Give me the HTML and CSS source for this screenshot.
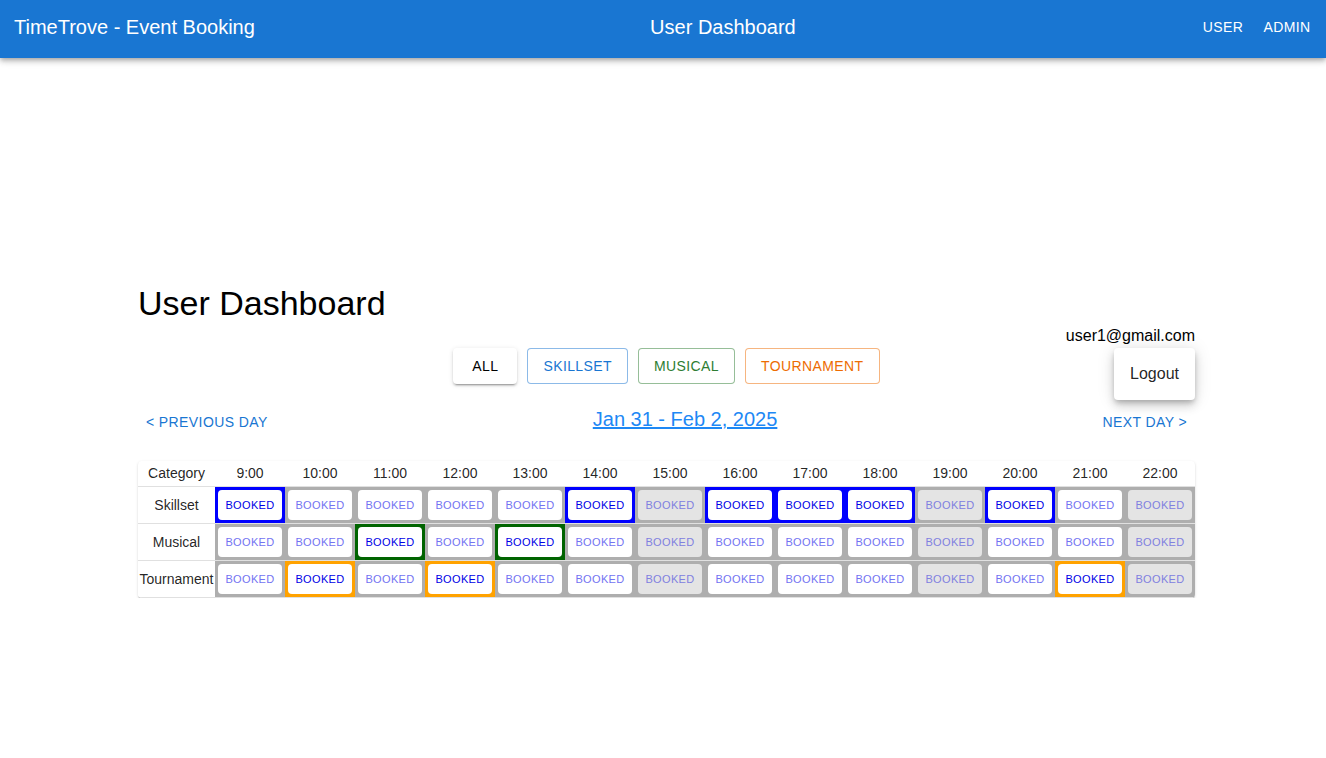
FILE: index.html
```html
<!DOCTYPE html>
<html lang="en">
<head>
<meta charset="utf-8">
<title>TimeTrove - Event Booking</title>
<link rel="stylesheet" href="styles.css">
</head>
<body>
<header class="appbar">
  <div class="brand">TimeTrove - Event Booking</div>
  <div class="bar-title">User Dashboard</div>
  <nav class="bar-nav">
    <button class="bar-btn">User</button>
    <button class="bar-btn">Admin</button>
  </nav>
</header>

<main class="page">
  <h1 class="page-title">User Dashboard</h1>

  <div class="toolbar">
    <div></div>
    <div class="filters">
      <button class="filter filter-all">All</button>
      <button class="filter filter-skill">Skillset</button>
      <button class="filter filter-music">Musical</button>
      <button class="filter filter-tour">Tournament</button>
    </div>
    <div class="user-box">
      <div class="user-email">user1@gmail.com</div>
      <button class="logout">Logout</button>
    </div>
  </div>

  <div class="daynav">
    <button class="nav-btn">&lt; Previous Day</button>
    <a class="date-link" href="#">Jan 31 - Feb 2, 2025</a>
    <button class="nav-btn">Next Day &gt;</button>
  </div>

  <div class="table-paper">
    <table class="sched">
      <colgroup>
        <col class="col-cat">
        <col class="col-slot"><col class="col-slot"><col class="col-slot"><col class="col-slot"><col class="col-slot"><col class="col-slot"><col class="col-slot">
        <col class="col-slot"><col class="col-slot"><col class="col-slot"><col class="col-slot"><col class="col-slot"><col class="col-slot"><col class="col-slot">
      </colgroup>
      <thead>
        <tr>
          <th>Category</th>
          <th>9:00</th><th>10:00</th><th>11:00</th><th>12:00</th><th>13:00</th><th>14:00</th><th>15:00</th>
          <th>16:00</th><th>17:00</th><th>18:00</th><th>19:00</th><th>20:00</th><th>21:00</th><th>22:00</th>
        </tr>
      </thead>
      <tbody>
        <tr>
          <td class="cat">Skillset</td>
          <td class="slot on-blue"><span class="cell-btn active">Booked</span></td>
          <td class="slot"><span class="cell-btn">Booked</span></td>
          <td class="slot"><span class="cell-btn">Booked</span></td>
          <td class="slot"><span class="cell-btn">Booked</span></td>
          <td class="slot"><span class="cell-btn">Booked</span></td>
          <td class="slot on-blue"><span class="cell-btn active">Booked</span></td>
          <td class="slot"><span class="cell-btn off">Booked</span></td>
          <td class="slot on-blue"><span class="cell-btn active">Booked</span></td>
          <td class="slot on-blue"><span class="cell-btn active">Booked</span></td>
          <td class="slot on-blue"><span class="cell-btn active">Booked</span></td>
          <td class="slot"><span class="cell-btn off">Booked</span></td>
          <td class="slot on-blue"><span class="cell-btn active">Booked</span></td>
          <td class="slot"><span class="cell-btn">Booked</span></td>
          <td class="slot"><span class="cell-btn off">Booked</span></td>
        </tr>
        <tr>
          <td class="cat">Musical</td>
          <td class="slot"><span class="cell-btn">Booked</span></td>
          <td class="slot"><span class="cell-btn">Booked</span></td>
          <td class="slot on-green"><span class="cell-btn active">Booked</span></td>
          <td class="slot"><span class="cell-btn">Booked</span></td>
          <td class="slot on-green"><span class="cell-btn active">Booked</span></td>
          <td class="slot"><span class="cell-btn">Booked</span></td>
          <td class="slot"><span class="cell-btn off">Booked</span></td>
          <td class="slot"><span class="cell-btn">Booked</span></td>
          <td class="slot"><span class="cell-btn">Booked</span></td>
          <td class="slot"><span class="cell-btn">Booked</span></td>
          <td class="slot"><span class="cell-btn off">Booked</span></td>
          <td class="slot"><span class="cell-btn">Booked</span></td>
          <td class="slot"><span class="cell-btn">Booked</span></td>
          <td class="slot"><span class="cell-btn off">Booked</span></td>
        </tr>
        <tr>
          <td class="cat">Tournament</td>
          <td class="slot"><span class="cell-btn">Booked</span></td>
          <td class="slot on-orange"><span class="cell-btn active">Booked</span></td>
          <td class="slot"><span class="cell-btn">Booked</span></td>
          <td class="slot on-orange"><span class="cell-btn active">Booked</span></td>
          <td class="slot"><span class="cell-btn">Booked</span></td>
          <td class="slot"><span class="cell-btn">Booked</span></td>
          <td class="slot"><span class="cell-btn off">Booked</span></td>
          <td class="slot"><span class="cell-btn">Booked</span></td>
          <td class="slot"><span class="cell-btn">Booked</span></td>
          <td class="slot"><span class="cell-btn">Booked</span></td>
          <td class="slot"><span class="cell-btn off">Booked</span></td>
          <td class="slot"><span class="cell-btn">Booked</span></td>
          <td class="slot on-orange"><span class="cell-btn active">Booked</span></td>
          <td class="slot"><span class="cell-btn off">Booked</span></td>
        </tr>
      </tbody>
    </table>
  </div>
</main>
</body>
</html>
```

FILE: styles.css
```css
* { box-sizing: border-box; }

html, body {
  margin: 0;
  padding: 0;
  background: #fff;
  font-family: "Liberation Sans", Arial, Helvetica, sans-serif;
  color: rgba(0, 0, 0, 0.87);
}

button {
  font-family: inherit;
  cursor: pointer;
}

/* App bar */
.appbar {
  height: 58px;
  background: #1976d2;
  color: #fff;
  display: flex;
  align-items: center;
  padding: 0 7px 4px 14px;
  box-shadow: 0 2px 4px -1px rgba(0,0,0,0.2), 0 4px 5px 0 rgba(0,0,0,0.14), 0 1px 10px 0 rgba(0,0,0,0.12);
  position: relative;
  z-index: 2;
}

.brand {
  font-size: 20px;
  line-height: 32px;
}

.bar-title {
  flex: 1;
  text-align: center;
  font-size: 20px;
  line-height: 32px;
}

.bar-nav {
  display: flex;
}

.bar-btn {
  background: none;
  border: 0;
  color: #fff;
  font-size: 14px;
  line-height: 24px;
  letter-spacing: 0.4px;
  text-transform: uppercase;
  padding: 6px 8px;
  min-width: 64px;
}

/* Page */
.page {
  margin: 226px 131px 0 138px;
}

.page-title {
  margin: 0;
  font-size: 34px;
  font-weight: 400;
  line-height: 39px;
  color: #000;
}

.toolbar {
  display: grid;
  grid-template-columns: 1fr auto 1fr;
  align-items: start;
}

.filters {
  display: flex;
  gap: 10px;
  padding-top: 25px;
}

.filter {
  height: 36px;
  min-width: 64px;
  font-size: 14px;
  letter-spacing: 0.4px;
  text-transform: uppercase;
  border-radius: 4px;
  padding: 5px 15px;
  background: #fff;
  border: 1px solid;
}

.filter-all {
  border: 0;
  padding: 6px 16px;
  color: #000;
  box-shadow: 0 3px 1px -2px rgba(0,0,0,0.2), 0 2px 2px 0 rgba(0,0,0,0.14), 0 1px 5px 0 rgba(0,0,0,0.12);
}

.filter-skill { color: #1976d2; border-color: rgba(25,118,210,0.5); }
.filter-music { color: #2e7d32; border-color: rgba(46,125,50,0.5); }
.filter-tour { color: #ed6c02; border-color: rgba(237,108,2,0.5); }

.user-box {
  justify-self: end;
  display: flex;
  flex-direction: column;
  align-items: flex-end;
}

.user-email {
  font-size: 16px;
  line-height: 25px;
  color: #000;
}

.logout {
  background: #fff;
  border: 0;
  border-radius: 4px;
  padding: 16px;
  font-size: 16px;
  line-height: 20px;
  color: rgba(0,0,0,0.87);
  box-shadow: 0 3px 5px -1px rgba(0,0,0,0.2), 0 6px 10px 0 rgba(0,0,0,0.14), 0 1px 18px 0 rgba(0,0,0,0.12);
}

/* Day navigation */
.daynav {
  margin-top: 4px;
  display: flex;
  justify-content: space-between;
  align-items: center;
  height: 36px;
}

.nav-btn {
  background: none;
  border: 0;
  color: #1976d2;
  font-size: 14px;
  line-height: 24px;
  letter-spacing: 0.4px;
  text-transform: uppercase;
  padding: 6px 8px;
}

.date-link {
  color: #1e88f5;
  font-size: 20px;
  line-height: 24px;
  text-decoration: underline;
  margin-top: -6px;
}

/* Table */
.table-paper {
  margin-top: 21px;
  background: #fff;
  border-radius: 4px;
  box-shadow: 0 2px 1px -1px rgba(0,0,0,0.2), 0 1px 1px 0 rgba(0,0,0,0.14), 0 1px 3px 0 rgba(0,0,0,0.12);
  overflow: hidden;
}

.sched {
  width: 1057px;
  border-collapse: collapse;
  table-layout: fixed;
}

.col-cat { width: 77px; }
.col-slot { width: 70px; }

.sched th {
  height: 25px;
  padding: 0;
  font-size: 14px;
  font-weight: 400;
  color: rgba(0,0,0,0.87);
  text-align: center;
  border-bottom: 1px solid #e0e0e0;
}

.sched td {
  padding: 3px;
  border-bottom: 1px solid #e0e0e0;
}

.sched td.cat {
  padding: 0;
  background: #fff;
  font-size: 14px;
  text-align: center;
  color: rgba(0,0,0,0.87);
  white-space: nowrap;
}

.sched td.slot { background: #aeaeae; }
.sched td.on-blue { background: #0000ff; }
.sched td.on-green { background: #006400; }
.sched td.on-orange { background: #ffa200; }

.cell-btn {
  display: block;
  height: 30px;
  line-height: 30px;
  background: #fff;
  border-radius: 4px;
  text-align: center;
  font-size: 11px;
  letter-spacing: 0.35px;
  text-transform: uppercase;
  color: #7373f2;
}

.cell-btn.active { color: #0000e6; }
.cell-btn.off { background: #e4e4e4; color: #8080e0; }
```
